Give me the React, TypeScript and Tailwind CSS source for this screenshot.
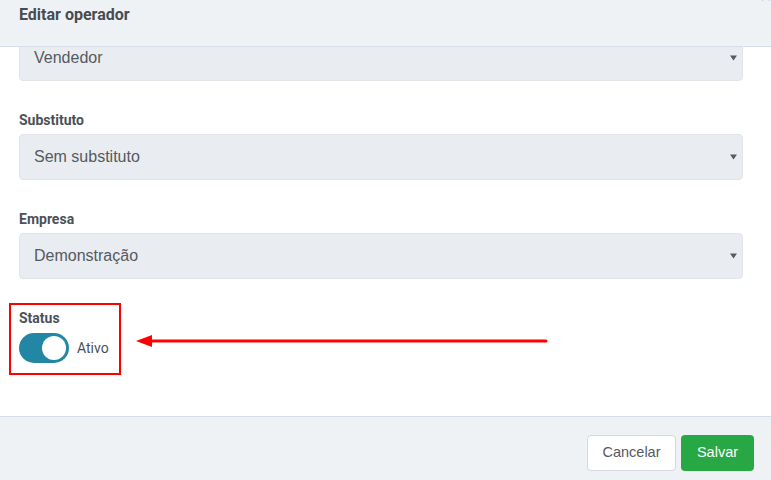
import React from "react";

function Caret() {
  return (
    <svg width="7" height="6" viewBox="0 0 7 6" className="shrink-0">
      <path d="M0 0.5 L7 0.5 L3.5 5.5 Z" fill="#555b61" />
    </svg>
  );
}

function Select({ value }: { value: string }) {
  return (
    <div className="flex h-[46px] items-center justify-between rounded-[4px] border border-[#e1e5ea] bg-[#e9ecf0] pl-[14px] pr-[5px]">
      <span className="text-[16px] text-[#555a60]" style={{ fontFamily: '"Liberation Sans", Arial, sans-serif' }}>
        {value}
      </span>
      <Caret />
    </div>
  );
}

function Label({ children }: { children: React.ReactNode }) {
  return (
    <div className="mb-[4px] h-[20px] text-[14px] font-bold leading-[20px] text-[#4b5158]">{children}</div>
  );
}

export default function App() {
  return (
    <div
      className="relative flex h-[480px] w-[771px] flex-col overflow-hidden bg-white"
      style={{ fontFamily: 'Roboto, "Noto Sans", sans-serif' }}
    >
      <div className="relative h-[47px] shrink-0 border-b border-[#d6dee7] bg-[#eff2f5] pl-[19px] pt-[5px]">
        <div className="text-[16px] font-bold leading-[20px] text-[#474c52]">Editar operador</div>
        <span className="absolute right-[-1px] top-[-15px] text-[22px] leading-[22px] text-[#a3a9ae]">×</span>
      </div>

      <div className="relative flex-1 pl-[19px] pr-[28px]">
        <div className="h-[34px] overflow-hidden">
          <div className="-mt-[12px]">
            <Select value="Vendedor" />
          </div>
        </div>

        <div className="mt-[29px]">
          <Label>Substituto</Label>
          <Select value="Sem substituto" />
        </div>

        <div className="mt-[29px]">
          <Label>Empresa</Label>
          <Select value="Demonstração" />
        </div>

        <div className="mt-[29px]">
          <div className="h-[20px] text-[14px] font-bold leading-[20px] text-[#4b5158]">Status</div>
          <div className="mt-[5px] flex items-center gap-[8px]">
            <div className="flex h-[30px] w-[50px] items-center justify-end rounded-full bg-[#2386a4] pr-[3px]">
              <div className="h-[24px] w-[24px] rounded-full bg-white" />
            </div>
            <span className="text-[14px] text-[#4b5158]">Ativo</span>
          </div>
        </div>

        <div className="pointer-events-none absolute left-[9px] top-[256px] h-[72px] w-[112px] border-2 border-[#ff0000]" />
        <svg className="pointer-events-none absolute left-[130px] top-[284px]" width="420" height="20" viewBox="0 0 420 20">
          <line x1="20" y1="10" x2="416" y2="10" stroke="#ff0000" strokeWidth="3" strokeLinecap="round" />
          <path d="M6 10 L22 4 L22 16 Z" fill="#ff0000" />
        </svg>
      </div>

      <div className="flex h-[64px] shrink-0 items-start justify-end gap-[5px] border-t border-[#d6dee7] bg-[#eff2f5] pr-[17px] pt-[18px]">
        <button
          className="h-[36px] w-[89px] rounded-[4px] border border-[#d3d9df] bg-white text-[14.5px] text-[#555a60]"
          style={{ fontFamily: '"Liberation Sans", Arial, sans-serif' }}
        >
          Cancelar
        </button>
        <button
          className="h-[36px] w-[73px] rounded-[4px] bg-[#28a745] text-[14.5px] text-white"
          style={{ fontFamily: '"Liberation Sans", Arial, sans-serif' }}
        >
          Salvar
        </button>
      </div>
    </div>
  );
}
